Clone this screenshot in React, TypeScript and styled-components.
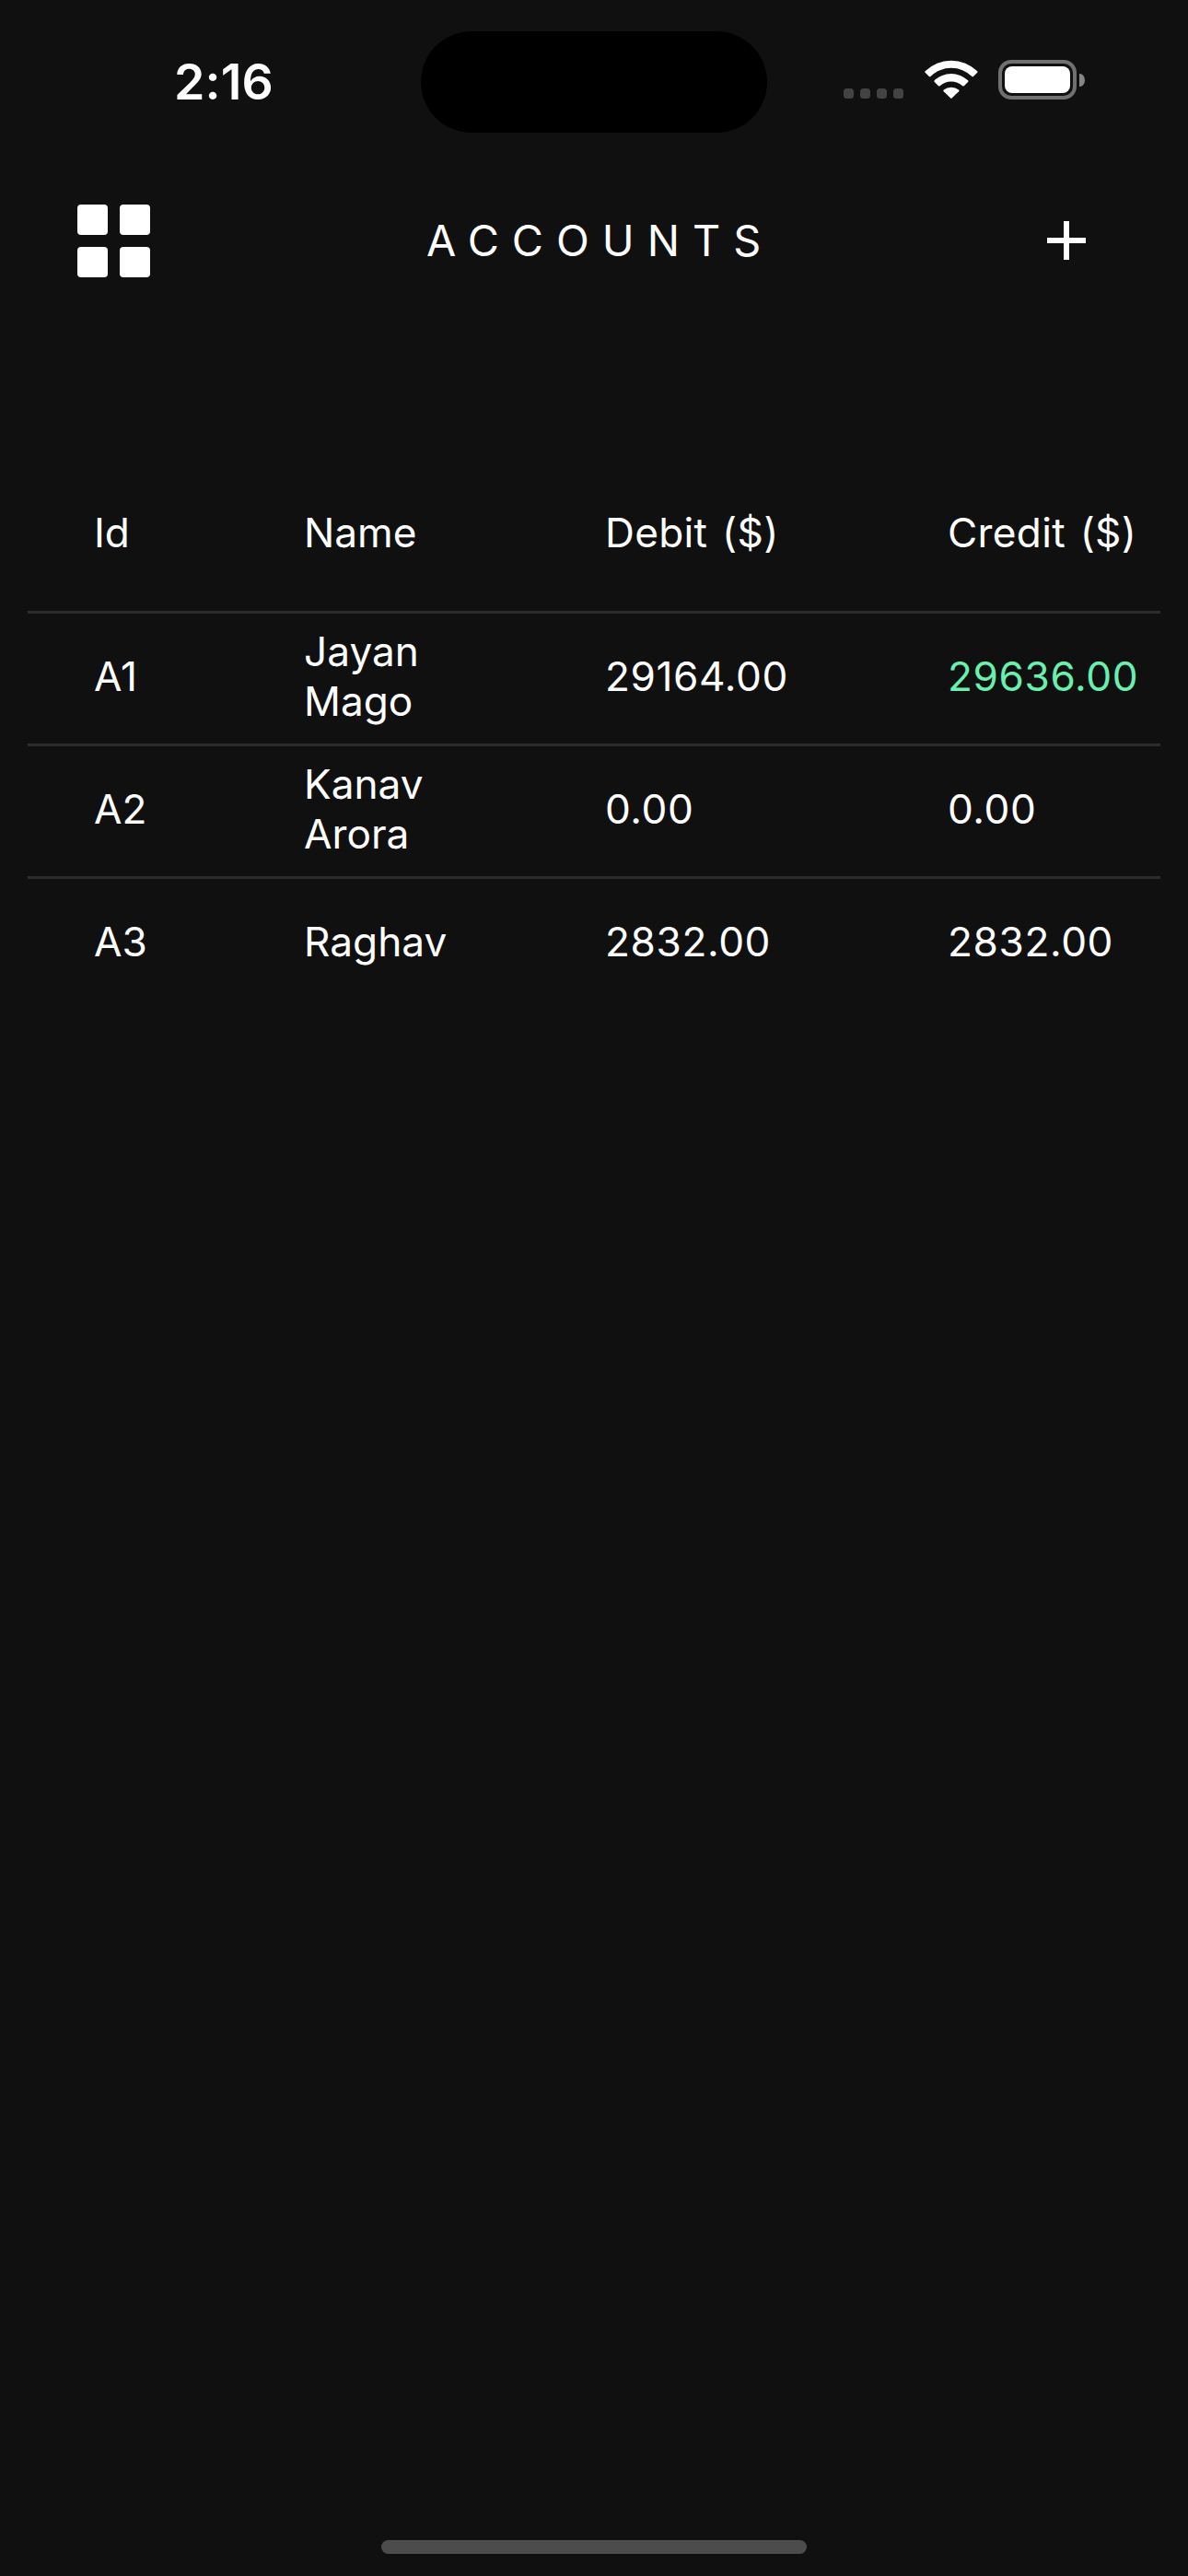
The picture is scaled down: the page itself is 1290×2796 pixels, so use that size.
import React from "react";
import styled, { createGlobalStyle } from "styled-components";

const GlobalStyle = createGlobalStyle`
  html, body { margin: 0; padding: 0; background: #101010; }
  *, *::before, *::after { box-sizing: border-box; }
`;

const Screen = styled.div`
  width: 1290px;
  height: 2796px;
  display: flex;
  flex-direction: column;
  background: #101010;
  color: #fff;
  font-family: Inter, "Liberation Sans", sans-serif;
  overflow: hidden;
`;

const StatusBar = styled.header`
  height: 177px;
  display: grid;
  grid-template-columns: 457px 376px 1fr;
  flex: none;
`;

const Clock = styled.time`
  padding: 57px 0 0 189px;
  font-size: 53.6px;
  font-weight: 600;
  line-height: 64px;
  letter-spacing: 0.1px;
`;

const Island = styled.div`
  height: 110px;
  margin-top: 34px;
  border-radius: 55px;
  background: #000;
`;

const StatusIcons = styled.div`
  height: 43px;
  margin: 65px 0 0 83px;
  display: flex;
  align-items: flex-start;
`;

const SignalDots = styled.div`
  display: flex;
  gap: 7px;
  width: 65px;
  margin: 31px 22.5px 0 0;
`;

const Dot = styled.span`
  width: 11px;
  height: 11px;
  border-radius: 3.5px;
  background: #434343;
`;

const WifiIcon = styled.svg`
  width: 58px;
  height: 43px;
  margin-right: 22.5px;
`;

const BatteryShell = styled.div`
  width: 85px;
  height: 43px;
  padding: 3px;
  border: 4px solid #707070;
  border-radius: 14px;
`;

const BatteryLevel = styled.div`
  height: 29px;
  border-radius: 8px;
  background: #fff;
`;

const BatteryNub = styled.span`
  width: 5.5px;
  height: 14px;
  margin: 14.5px 0 0 3px;
  border-radius: 0 5.5px 5.5px 0 / 0 7px 7px 0;
  background: #868686;
`;

const AppBar = styled.nav`
  height: 168px;
  display: grid;
  grid-template-columns: 379px 1fr 195px;
  padding-left: 84px;
  align-items: start;
  flex: none;
`;

const MenuButton = styled.button`
  margin: 45px 0 0;
  padding: 0;
  border: 0;
  background: none;
  display: grid;
  grid-template-columns: 33px 33px;
  grid-auto-rows: 33.4px;
  gap: 12.4px 13px;
`;

const Tile = styled.span`
  border-radius: 4px;
  background: #fff;
`;

const Title = styled.h1`
  margin: 55px 0 0;
  font-size: 46.8px;
  font-weight: 400;
  line-height: 58px;
  letter-spacing: 14px;
`;

const AddButton = styled.button`
  width: 42px;
  height: 42px;
  margin: 63px 0 0 42px;
  padding: 0;
  border: 0;
  background: none;
`;

const PlusIcon = styled.svg`
  display: block;
  width: 42px;
  height: 42px;
`;

const Table = styled.main`
  flex: 1;
  margin: 150px 30px 0;
`;

const Row = styled.div<{ $head?: boolean }>`
  height: ${(p) => (p.$head ? 168 : 144)}px;
  display: grid;
  grid-template-columns: 228px 327px 372px 231px;
  align-items: center;
  padding-left: 72px;
  padding-bottom: ${(p) => (p.$head ? 2 : 5)}px;
  border-top: ${(p) => (p.$head ? "none" : "3px solid #2c2c2c")};
`;

const Cell = styled.span`
  font-size: 44.2px;
  line-height: 54px;
`;

const NameCell = styled(Cell)`
  width: 180px;
`;

const AmountHeading = styled(Cell)`
  letter-spacing: 0.3px;
  word-spacing: 3px;
`;

const Amount = styled(Cell)<{ $positive?: boolean }>`
  letter-spacing: 0.6px;
  color: ${(p) => (p.$positive ? "#69f0ae" : "#fff")};
`;

const HomeIndicator = styled.div`
  width: 462px;
  height: 15px;
  margin: 0 auto 24px;
  border-radius: 7.5px;
  background: #4c4c4c;
  flex: none;
`;

const accounts = [
  { id: "A1", name: "Jayan Mago", debit: 29164, credit: 29636 },
  { id: "A2", name: "Kanav Arora", debit: 0, credit: 0 },
  { id: "A3", name: "Raghav", debit: 2832, credit: 2832 },
];

export default function App() {
  return (
    <>
      <GlobalStyle />
      <Screen>
        <StatusBar>
          <Clock>2:16</Clock>
          <Island />
          <StatusIcons>
            <SignalDots>
              {[0, 1, 2, 3].map((i) => (
                <Dot key={i} />
              ))}
            </SignalDots>
            <WifiIcon viewBox="0 0 58 43" fill="#fff">
              <path d="M0.6 12.2A40.6 40.6 0 0 1 57.2 12.2Q58 13 57.2 13.8L53 17.9Q52.2 18.6 51.4 17.9A32.4 32.4 0 0 0 6.4 17.9Q5.6 18.6 4.8 17.9L0.6 13.8Q-0.2 13 0.6 12.2Z" />
              <path d="M10.7 22.3A26.3 26.3 0 0 1 47.1 22.3Q47.9 23.1 47.1 23.9L42.8 28.2Q42 28.9 41.2 28.2A18.4 18.4 0 0 0 16.6 28.2Q15.8 28.9 15 28.2L10.7 23.9Q9.9 23.1 10.7 22.3Z" />
              <path d="M20.7 32.6A13 13 0 0 1 37.1 32.6Q37.9 33.4 37.1 34.2L29.6 41.6Q28.9 42.2 28.2 41.6L20.7 34.2Q19.9 33.4 20.7 32.6Z" />
            </WifiIcon>
            <BatteryShell>
              <BatteryLevel />
            </BatteryShell>
            <BatteryNub />
          </StatusIcons>
        </StatusBar>
        <AppBar>
          <MenuButton aria-label="Menu">
            <Tile />
            <Tile />
            <Tile />
            <Tile />
          </MenuButton>
          <Title>ACCOUNTS</Title>
          <AddButton aria-label="Add account">
            <PlusIcon viewBox="0 0 42 42" fill="#fff">
              <path d="M18 0h6v18h18v6H24v18h-6V24H0v-6h18z" />
            </PlusIcon>
          </AddButton>
        </AppBar>
        <Table>
          <Row $head>
            <Cell>Id</Cell>
            <Cell>Name</Cell>
            <AmountHeading>Debit ($)</AmountHeading>
            <AmountHeading>Credit ($)</AmountHeading>
          </Row>
          {accounts.map((a) => (
            <Row key={a.id}>
              <Cell>{a.id}</Cell>
              <NameCell>{a.name}</NameCell>
              <Amount>{a.debit.toFixed(2)}</Amount>
              <Amount $positive={a.credit > a.debit}>{a.credit.toFixed(2)}</Amount>
            </Row>
          ))}
        </Table>
        <HomeIndicator />
      </Screen>
    </>
  );
}
